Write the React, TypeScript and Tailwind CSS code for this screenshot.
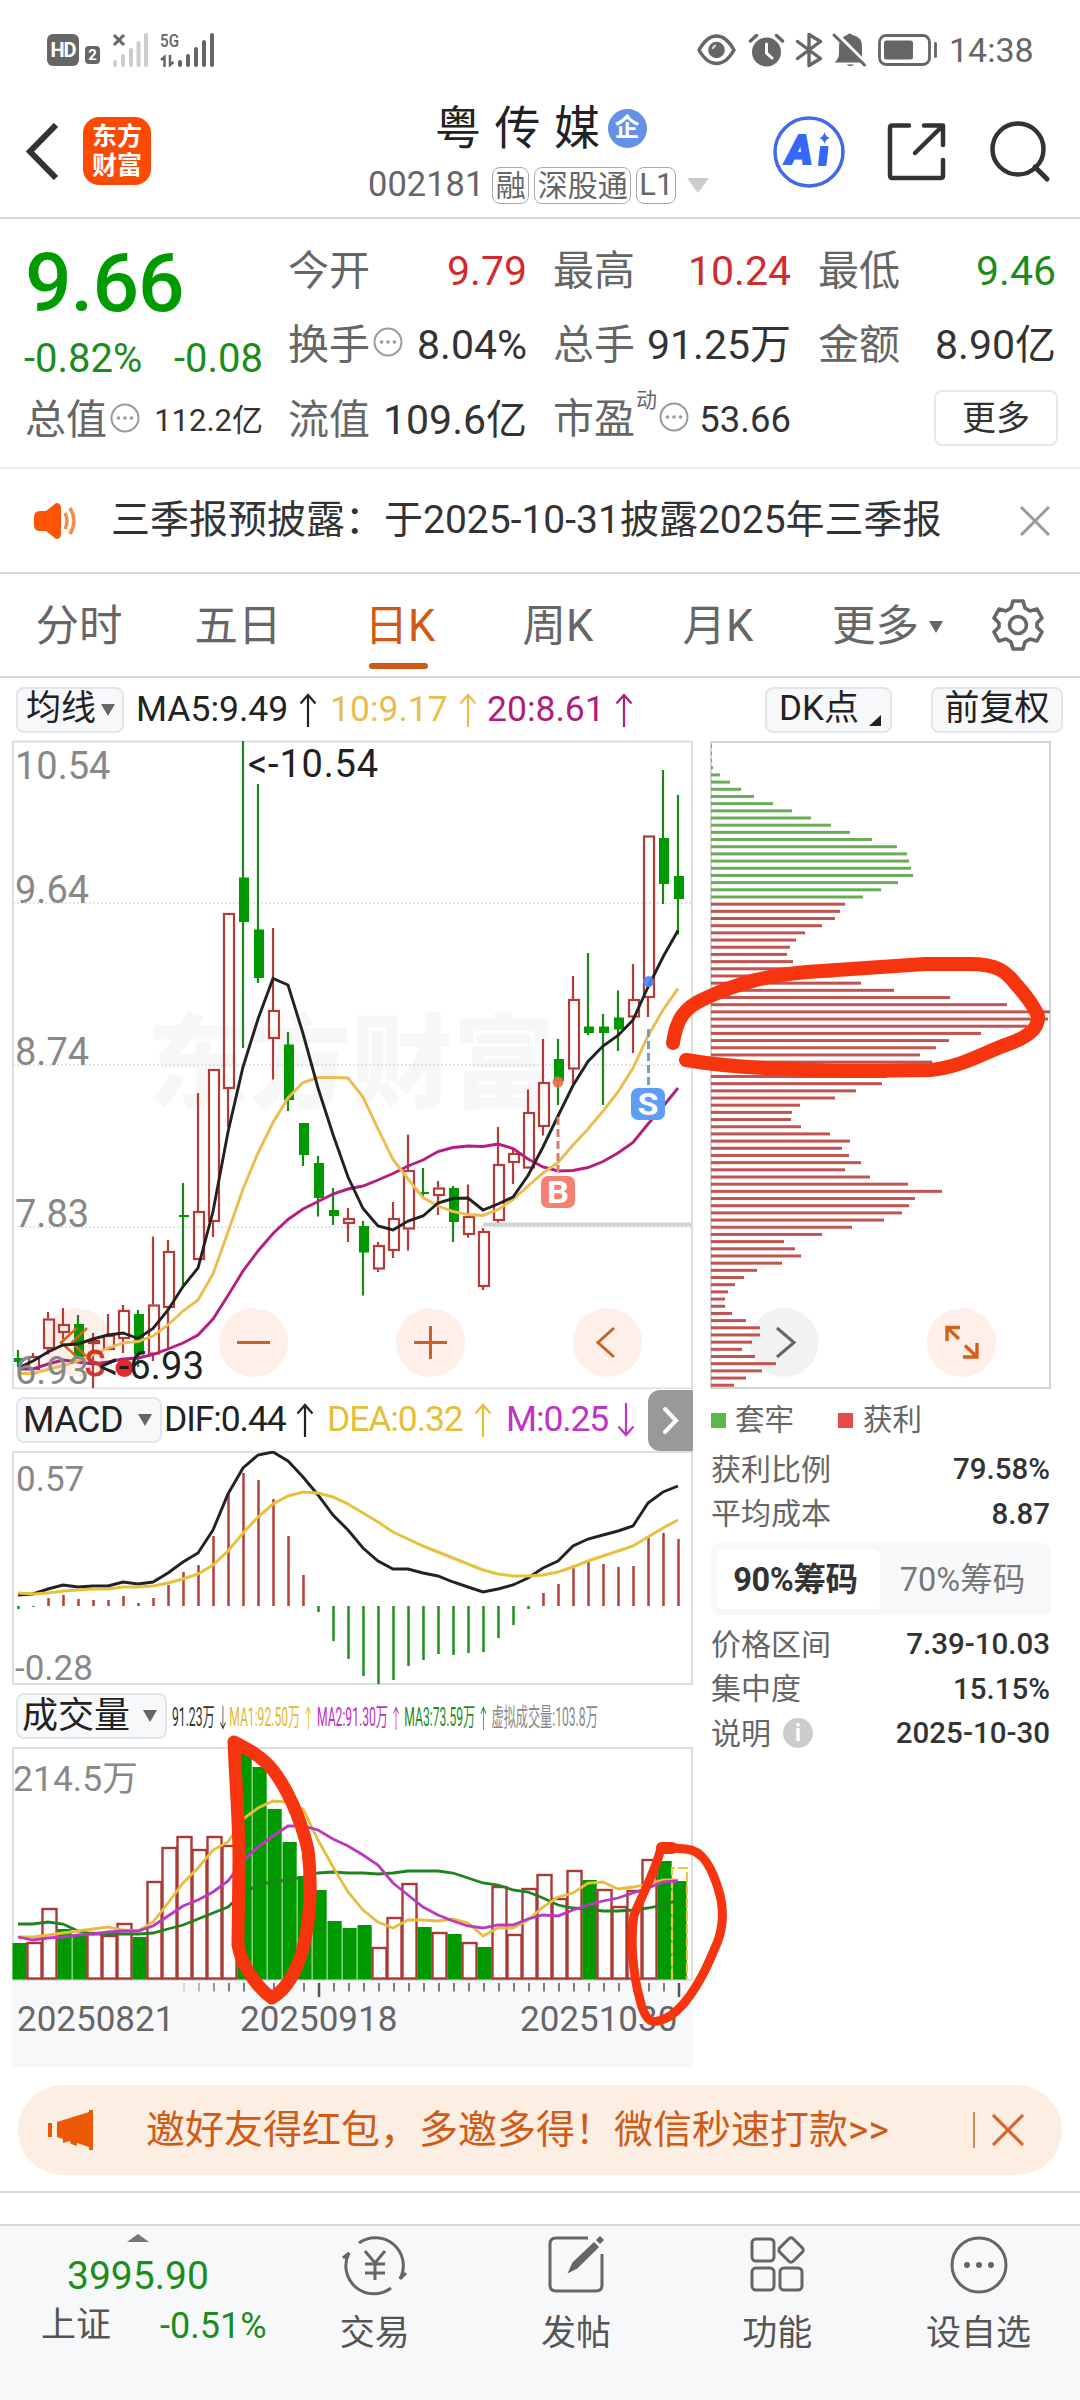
import type { ReactNode } from 'react'

type Candle = ['r' | 'g', number, number, number, number]

const STEP = 15

// colour, high, body top, body bottom, low
const candles: Candle[] = [
  ['g', 610, 618, 622, 627], ['r', 613, 616, 630, 630], ['r', 572, 578.5, 609, 614.5],
  ['r', 568, 584, 593, 599], ['g', 575, 584, 617, 617], ['r', 593, 600, 604, 648],
  ['r', 574, 595, 610, 610], ['r', 565, 570, 599, 613], ['g', 570, 574, 614.5, 627],
  ['r', 496.5, 564.5, 614.5, 621], ['r', 500, 511, 568, 610], ['g', 443, 475, 477, 545],
  ['r', 353, 471, 520, 520], ['r', 329, 329, 482, 497], ['r', 173, 173, 349, 387],
  ['g', 1, 137.5, 182, 308], ['g', 44, 189.5, 238, 243], ['r', 188, 270, 299, 339.5],
  ['g', 292, 304.5, 360, 371], ['g', 383, 383, 415, 426], ['g', 416, 423, 458, 476.5],
  ['g', 448, 470, 476, 485], ['r', 468, 478, 484, 502], ['g', 481, 486, 512.5, 555.5],
  ['r', 502, 505, 529.5, 532], ['r', 462, 478, 511, 518], ['r', 394.5, 430, 489.5, 510.5],
  ['g', 428, 452, 454, 458], ['r', 441, 447.5, 456, 475], ['g', 446, 448, 482, 502],
  ['r', 444.5, 476, 495, 497.5], ['r', 488, 491, 547, 550], ['r', 387, 424, 481, 483.5],
  ['r', 408.5, 413, 423, 444], ['r', 349.5, 372, 428.5, 428.5], ['r', 299, 342, 387, 395.5],
  ['g', 299, 319, 341, 365], ['r', 236, 259, 329.5, 343.5], ['g', 213, 286.5, 293, 295],
  ['g', 274, 286.5, 293, 365], ['g', 250.5, 277.5, 289.5, 311], ['r', 224, 259, 277.5, 313],
  ['r', 95.5, 95.5, 258, 277], ['g', 30, 98, 144, 164], ['g', 55, 136, 159, 194.5],
]

const ma5 = [628, 621, 612, 605, 604, 599, 595, 593, 598.5, 588.5, 570, 546.5, 528, 471.5, 392, 327, 279, 238.5, 245, 293.5, 348, 394.5, 437, 468.5, 486, 490, 481, 476, 463, 458.5, 458, 470, 464, 457, 435.5, 407, 376, 345.5, 321.5, 306, 295.5, 280, 247, 217, 190.5]
const ma10 = [633.5, 633.5, 629.5, 625.5, 621, 615, 608, 603, 601.5, 596, 585, 571, 560, 534, 492, 449, 413, 382.5, 358, 342.5, 337.5, 337.5, 338, 357, 389, 419.5, 439, 457.5, 466, 471.5, 474.5, 475.5, 469.5, 459.5, 446, 433, 422.5, 405, 389, 371, 352, 328, 296, 270, 248.5]
const ma20 = [629, 629, 624, 620, 622, 624, 622, 619, 618, 614.5, 609, 603, 595, 579, 555.5, 531, 511, 493.5, 479.5, 469, 461.5, 454, 449, 446, 440, 433.5, 426, 420, 411.5, 407.5, 406, 406.5, 404, 408.5, 419, 427, 431, 430.5, 427.5, 421.5, 413, 402.5, 384, 366.5, 348]

const macdBars = [-3, -1, 8, 11, 7, 6, 6, 10, 3, 8, 21, 34, 41, 70, 113, 133, 126, 107, 70, 31, -6, -35, -53, -70, -78, -74, -60, -54, -48, -49, -47, -46, -32, -19, -3, 13, 22, 41, 44, 42, 39, 40, 69, 73, 67]
const dif = [144, 143, 138, 134, 136, 135, 135, 131, 133, 131, 122, 111, 102, 79, 43, 17, 4, 1, 10, 26, 44, 64, 79, 97, 110, 118, 118, 122, 125, 131, 136, 141, 138, 134, 127, 117, 110, 95, 88, 84, 80, 75, 52, 41, 35]
const dea = [142, 143, 142, 140, 139, 138, 138, 136, 136, 135, 132, 128, 123, 114, 100, 82, 66, 53, 45, 41, 42, 46, 53, 62, 71, 81, 88, 95, 101, 107, 113, 119, 123, 125, 125, 124, 121, 116, 110, 105, 100, 95, 86, 77, 69]

const volColors = 'grrggrrrgrrrrrrgggggggggrrrgrgrgrrrrrrgrrrrgg'
const volTops = [196, 195, 161, 182, 189, 185, 188, 176, 190, 134, 100, 89, 102, 89, 98, 5, 20, 62, 95, 129, 143, 174, 181, 178, 200, 170, 136, 180, 185, 187, 195, 200, 139, 187, 141, 127, 151, 123, 133, 142, 159, 143, 112, 114, 134]
const vma1 = [190, 190, 188, 186, 184, 182, 180, 183, 184, 175, 156, 136, 121, 103, 95, 72, 61, 54, 55, 62, 93, 120, 145, 163, 175, 181, 173, 173, 174, 172, 176, 189, 181, 181, 173, 160, 150, 146, 136, 135, 142, 140, 137, 133, 133]
const vma2 = [190, 193, 191, 190, 188, 187, 185, 184, 184, 179, 169, 159, 153, 145, 134, 114, 100, 89, 79, 79, 83, 92, 99, 108, 118, 136, 148, 160, 168, 174, 179, 181, 178, 178, 172, 168, 169, 163, 158, 154, 151, 146, 141, 135, 134]
const vma3 = [177, 177, 175, 177, 184, 187, 187, 187, 187, 186, 182, 178, 172, 166, 160, 146, 138, 135, 133, 130, 126, 125, 126, 126, 127, 126, 124, 124, 124, 126, 131, 136, 138, 143, 145, 151, 158, 161, 162, 164, 164, 163, 161, 158, 153]

const trapped = [1, 1, 1, 2, 9, 19, 30, 43, 62, 81, 100, 120, 139, 161, 186, 196, 198, 200, 202, 187, 170, 152]
const profit = [134, 129, 124, 111, 94, 85, 79, 76, 82, 106, 122, 150, 183, 239, 296, 339, 337, 316, 270, 238, 225, 209, 221, 196, 176, 171, 145, 124, 89, 81, 80, 90, 119, 139, 131, 138, 150, 134, 159, 197, 231, 204, 198, 191, 173, 141, 111, 73, 84, 90, 71, 46, 33, 24, 17, 14, 14, 21, 35, 49, 49, 41, 31, 44, 65, 51, 35, 23]

const line = (values: number[]) => values.map((y, i) => `${6 + i * STEP},${y}`).join(' ')

function Arrow({ down = false, className = '' }: { down?: boolean; className?: string }) {
  return (
    <svg className={className} width="18" height="34" viewBox="0 0 18 34" fill="none" stroke="currentColor" strokeWidth="2.2">
      {down ? <path d="M9 0V32M1.5 23.5L9 32L16.5 23.5" /> : <path d="M9 34V2M1.5 10.5L9 2L16.5 10.5" />}
    </svg>
  )
}

function Caret({ className = '' }: { className?: string }) {
  return (
    <svg className={className} width="14" height="12" viewBox="0 0 14 12" fill="currentColor">
      <path d="M0 0H14L7 12Z" />
    </svg>
  )
}

function Dots() {
  return (
    <svg width="30" height="30" viewBox="0 0 30 30" fill="none" stroke="#9a9a9a" strokeWidth="2">
      <circle cx="15" cy="15" r="13.5" />
      <g fill="#9a9a9a" stroke="none">
        <circle cx="8.5" cy="15" r="1.8" />
        <circle cx="15" cy="15" r="1.8" />
        <circle cx="21.5" cy="15" r="1.8" />
      </g>
    </svg>
  )
}

function StatusBar() {
  return (
    <div className="flex h-[100px] items-center pl-[47px] text-[#666]">
      <div className="flex h-8 w-8 items-center justify-center rounded-md bg-[#666] text-[20px] font-bold tracking-tighter text-white">HD</div>
      <div className="mt-[9px] ml-[6px] flex h-[18px] w-[15px] items-center justify-center rounded-sm bg-[#666] text-[15px] leading-[18px] font-bold text-white">2</div>
      <svg className="ml-[12px]" width="37" height="34" viewBox="0 0 37 34">
        <g fill="#ccc">
          <rect x="1" y="27" width="4" height="7" rx="2" />
          <rect x="9" y="21" width="4" height="13" rx="2" />
          <rect x="17" y="15" width="4" height="19" rx="2" />
          <rect x="24.500" y="8" width="4" height="26" rx="2" />
          <rect x="32" y="0" width="4" height="34" rx="2" />
        </g>
        <path d="M2 2L12 12M12 2L2 12" stroke="#666" strokeWidth="3" />
      </svg>
      <svg className="ml-[11px]" width="54" height="34" viewBox="0 0 54 34" fill="#666">
        <text x="0" y="14" fontSize="19" fontWeight="500" textLength="19" lengthAdjust="spacingAndGlyphs">5G</text>
        <path d="M4.500 34V24L1 27M10 22V32L13.500 29" stroke="#666" strokeWidth="2.500" fill="none" />
        <rect x="18" y="27" width="4" height="7" rx="2" />
        <rect x="26" y="21" width="4" height="13" rx="2" />
        <rect x="34" y="14" width="4" height="20" rx="2" />
        <rect x="42" y="7" width="4" height="27" rx="2" />
        <rect x="50" y="0" width="4" height="34" rx="2" />
      </svg>
      {/* eye, alarm, bluetooth, muted bell */}
      <svg className="ml-[483px]" width="170" height="36" viewBox="0 0 170 36" fill="none" stroke="#666">
        <path d="M2 18C7 9 13 4 19.500 4S32 9 37 18C32 27 26 31.500 19.500 31.500S7 27 2 18Z" strokeWidth="3.400" />
        <circle cx="19.500" cy="18" r="8.300" fill="#666" stroke="none" />
        <path d="M15.500 17A4.500 4.500 0 0 1 19 13.500" stroke="#ddd" strokeWidth="1.800" />
        <circle cx="69.500" cy="20" r="14.500" fill="#666" stroke="none" />
        <path d="M53.500 9L59.500 3.500M79.500 3.500L85.500 9" strokeWidth="3.400" strokeLinecap="round" />
        <path d="M69.500 12V21L75 26" stroke="#fff" strokeWidth="3" strokeLinecap="round" />
        <path d="M100.500 9.500L123.500 26.500L112 33.500V2.500L123.500 9.500L100.500 26.500" strokeWidth="3.400" strokeLinecap="round" strokeLinejoin="round" />
        <path d="M137.500 30.500Q142 27 142 21V15Q142 9 145 6Q148 3.500 150 3Q152.500 0 155.500 3Q165 5 165 14V22Q165 27 168 30.500Z" fill="#666" stroke="none" />
        <path d="M139 1.500L169 31.500" stroke="#fff" strokeWidth="4" />
        <path d="M137 3L167.500 33" strokeWidth="3" strokeLinecap="round" />
        <path d="M149.500 32.500H157Q153.500 36 149.500 32.500Z" fill="#666" stroke="none" />
      </svg>
      <svg className="ml-[11px]" width="60" height="32" viewBox="0 0 60 32" fill="none" stroke="#666" strokeWidth="2.800">
        <rect x="1.500" y="1.500" width="50" height="29" rx="6.500" />
        <rect x="6" y="6.500" width="29" height="19" rx="2.500" fill="#666" stroke="none" />
        <path d="M57.500 9.500V22.500" strokeLinecap="round" />
      </svg>
      <span className="ml-[11px] text-[34px]">14:38</span>
    </div>
  )
}

function Header() {
  return (
    <div className="flex h-[119px] border-b-2 border-[#d8d8d8]">
      <svg className="mt-[23px] ml-[26px]" width="34" height="57" viewBox="0 0 34 57" fill="none" stroke="#333" strokeWidth="6">
        <path d="M30 2L4 28.500L30 55" />
      </svg>
      <div className="mt-[17px] ml-[23px] flex h-[68px] w-[68px] flex-col items-center justify-center rounded-2xl bg-[#fb4a04] text-[25px] leading-[29px] font-bold text-white">
        <span>东方</span>
        <span>财富</span>
      </div>
      <div className="ml-[217px] w-[345px]">
        <div className="flex h-[56px] items-center pl-[67px]">
          <span className="text-[46px] tracking-[13.5px] text-[#222]">粤传媒</span>
          <span className="-ml-[6px] flex h-[39px] w-[39px] items-center justify-center rounded-full bg-[#6490e5] text-[25px] font-bold text-white">企</span>
        </div>
        <div className="mt-[10px] flex h-[38px] items-center whitespace-nowrap text-[#666]">
          <span className="text-[34.5px]">002181</span>
          <span className="ml-[8px] flex h-[37px] w-[37px] shrink-0 items-center justify-center rounded-lg border-[1.5px] border-[#aaa] text-[30px]">融</span>
          <span className="ml-[5px] flex h-[37px] w-[97px] shrink-0 items-center justify-center rounded-lg border-[1.5px] border-[#aaa] text-[30px]">深股通</span>
          <span className="ml-[5px] flex h-[37px] w-[40px] shrink-0 items-center justify-center rounded-lg border-[1.5px] border-[#aaa] text-[31px]">L1</span>
          <svg className="ml-[11px] shrink-0" width="22" height="15" viewBox="0 0 22 15">
            <path d="M0 0H22L11 15Z" fill="#ccc" />
          </svg>
        </div>
      </div>
      <svg className="mt-[15px] ml-[59px]" width="74" height="74" viewBox="0 0 74 74">
        <circle cx="37" cy="37" r="34" fill="none" stroke="#4169e8" strokeWidth="3.500" />
        <g fill="#3568f5">
          <text x="14" y="49" fontSize="40" fontWeight="900" fontStyle="italic" stroke="#3568f5" strokeWidth="2">A</text>
          <path d="M49 32H55.500L53.500 50H47Z" strokeLinejoin="round" stroke="#3568f5" strokeWidth="2" />
          <path d="M52.500 17Q53.500 22 58 23Q53.500 24 52.500 29Q51.500 24 47 23Q51.500 22 52.500 17Z" />
        </g>
      </svg>
      <svg className="mt-[21px] ml-[39px]" width="64" height="62" viewBox="0 0 64 62" fill="none" stroke="#333" strokeWidth="4.500" strokeLinecap="round" strokeLinejoin="round">
        <path d="M24 4.500H7Q5 4.500 5 7V54Q5 57 7 57H55.500Q58 57 58 54.500V39M39 4.500H58V24M57 5.500L30 32" />
      </svg>
      <svg className="mt-[21px] ml-[40px]" width="62" height="62" viewBox="0 0 62 62" fill="none" stroke="#333" strokeWidth="4.500">
        <circle cx="29" cy="28" r="25.500" />
        <path d="M46 46L58 58" strokeWidth="5" strokeLinecap="round" />
      </svg>
    </div>
  )
}

function Quote({ label, value, color = 'text-[#333]', dots }: { label: string; value: string; color?: string; dots?: boolean }) {
  return (
    <div className="flex h-[74.5px] items-center whitespace-nowrap text-[41px]">
      <span className="text-[#666]">{label}</span>
      {dots && <span className="-mt-[8px] ml-[3px]"><Dots /></span>}
      <span className={`ml-auto ${color}`}>{value}</span>
    </div>
  )
}

function QuoteBoard() {
  return (
    <div className="flex h-[250px] border-b-2 border-[#ededed] pt-[15px] pl-[25px] text-[#333]">
      <div className="w-[238px]">
        <div className="flex h-[99px] items-center text-[82px] font-medium tracking-[-1px] text-[#009b00]">9.66</div>
        <div className="-ml-px flex h-[52px] items-center justify-between text-[40px] text-[#1c8c1c]">
          <span>-0.82%</span>
          <span>-0.08</span>
        </div>
        <div className="flex h-[72px] items-center text-[41px] whitespace-nowrap text-[#666]">
          <span>总值</span>
          <span className="-mt-[6px] ml-[3px]"><Dots /></span>
          <span className="ml-auto text-[31px] text-[#333]">112.2亿</span>
        </div>
      </div>
      <div className="ml-[25px] w-[239px]">
        <Quote label="今开" value="9.79" color="text-[#d22b2b]" />
        <Quote label="换手" value="8.04%" dots />
        <Quote label="流值" value="109.6亿" />
      </div>
      <div className="ml-[26px] w-[238px]">
        <Quote label="最高" value="10.24" color="text-[#d22b2b]" />
        <Quote label="总手" value="91.25万" />
        <div className="flex h-[74px] items-center text-[41px] whitespace-nowrap">
          <span className="text-[#666]">市盈</span>
          <span className="-mt-[38px] ml-[1px] text-[21px] text-[#666]">动</span>
          <span className="-mt-[6px] ml-[2px]"><Dots /></span>
          <span className="ml-auto text-[36.5px]">53.66</span>
        </div>
      </div>
      <div className="ml-[27px] w-[238px]">
        <Quote label="最低" value="9.46" color="text-[#1c8c1c]" />
        <Quote label="金额" value="8.90亿" />
        <div className="-mt-[2px] flex h-[74px] items-center justify-end">
          <button className="-mr-[2px] h-[56px] w-[124px] rounded-lg border-2 border-[#e8e8e8] text-[34px]">更多</button>
        </div>
      </div>
    </div>
  )
}

function Notice() {
  return (
    <div className="flex h-[105px] items-center border-b-2 border-[#d8d8d8] pl-[34px]">
      <svg width="46" height="36" viewBox="0 0 46 36">
        <path d="M6 8H12L22 0Q27 0 27 5V31Q27 36 22 36L12 28H6Q0 28 0 22V14Q0 8 6 8Z" fill="#fd5504" />
        <path d="M31 10Q35 18 31 26M36 5Q44 18 36 31" fill="none" stroke="#f78b4c" strokeWidth="3.500" />
      </svg>
      <span className="ml-[31px] text-[39px] whitespace-nowrap text-[#333]">三季报预披露：于2025-10-31披露2025年三季报</span>
      <svg className="ml-[78px]" width="30" height="30" viewBox="0 0 30 30" stroke="#999" strokeWidth="3">
        <path d="M1 1L29 29M29 1L1 29" />
      </svg>
    </div>
  )
}

function Tabs() {
  return (
    <div className="flex h-[104px] items-center border-b-2 border-[#d8d8d8] pt-[4px] text-[43.5px] text-[#666]">
      <span className="w-[158px] text-center">分时</span>
      <span className="w-[160px] text-center">五日</span>
      <span className="relative w-[164px] text-center text-[#d05a15]">
        日K
        <i className="absolute bottom-[-9px] left-[51px] h-[6px] w-[59px] rounded-full bg-[#d05a15]" />
      </span>
      <span className="w-[152px] text-center">周K</span>
      <span className="w-[168px] text-center">月K</span>
      <span className="ml-[30px]">更多</span>
      <Caret className="ml-[10px]" />
      <svg className="-mt-[4px] ml-[49px]" width="52" height="52" viewBox="0 0 52 52" fill="none" stroke="#666" strokeWidth="3.600" strokeLinejoin="round">
        <path d="M21 2H31L33 9L38 12L45 10L50 19L45 24V28L50 33L45 42L38 40L33 43L31 50H21L19 43L14 40L7 42L2 33L7 28V24L2 19L7 10L14 12L19 9Z" />
        <circle cx="26" cy="26" r="8.500" />
      </svg>
    </div>
  )
}

function Pill({ children, className }: { children: ReactNode; className: string }) {
  return (
    <div className={`flex h-[46px] shrink-0 items-center rounded-lg border-2 border-[#e3e5ea] bg-[#f7f8fa] whitespace-nowrap text-[#222] ${className}`}>
      {children}
    </div>
  )
}

function Toolbar() {
  return (
    <div className="flex h-[63px] items-center pl-[16px] text-[35.5px] whitespace-nowrap">
      <Pill className="w-[108px] pl-[8px] text-[35px]">
        均线<Caret className="ml-[5px] text-[#666]" />
      </Pill>
      <span className="ml-[12px] w-[163px] text-[#222]">MA5:9.49</span>
      <Arrow className="text-[#222]" />
      <span className="ml-[13px] w-[129px] text-[#e9bd52]">10:9.17</span>
      <Arrow className="text-[#e9bd52]" />
      <span className="ml-[10px] w-[128px] text-[#b01c7c]">20:8.61</span>
      <Arrow className="text-[#b01c7c]" />
      <Pill className="ml-[132px] w-[127px] pl-[12px] text-[35px]">
        DK点
        <svg className="mt-[22px] ml-[10px]" width="12" height="11" viewBox="0 0 12 11"><path d="M12 0V11H0Z" fill="#222" /></svg>
      </Pill>
      <Pill className="ml-[39px] w-[132px] justify-center text-[35px]">前复权</Pill>
    </div>
  )
}

function KChart() {
  return (
    <svg className="-mt-px" width="681" height="649" viewBox="0 0 681 649">
      <rect x="1" y="1.500" width="679" height="647" fill="#fff" stroke="#dedede" strokeWidth="2" />
      <text x="135" y="360" fontSize="102" fontWeight="900" fill="#f7f7f7">东方财富</text>
      {[163, 325, 487].map(y => (
        <path key={y} d={`M1 ${y}H679`} stroke="#dcdcdc" strokeWidth="1.500" strokeDasharray="2 2" />
      ))}
      {[77, 253.5, 430.5, 607.5].map(x => <circle key={x} cx={x - 12} cy="602.500" r="34.500" fill="#fef0e9" />)}
      <g stroke="#c8622a" strokeWidth="3" fill="none">
        <path d="M225 602.500H258M402 602.500H435M418.500 586V619M602 588L586 602.500L602 617" />
      </g>
      {candles.map(([c, high, top, bottom, low], i) => {
        const x = 6 + i * STEP
        if (c === 'g') {
          return (
            <g key={i}>
              <path d={`M${x} ${high}V${low}`} stroke="#1c861c" strokeWidth="2.2" />
              <rect x={x - 4} y={top} width="10" height={bottom - top} fill="#009a00" />
            </g>
          )
        }
        return (
          <g key={i} stroke="#b33c38" strokeWidth="2.2" fill="none">
            <path d={`M${x} ${high}V${top}M${x} ${bottom}V${low}`} />
            <rect x={x - 4} y={top + 1} width="10" height={Math.max(bottom - top - 2, 2)} />
          </g>
        )
      })}
      <path d="M65 588L49 602.500L65 617M75 588L60 602.500L75 617" stroke="#d0661e" strokeWidth="2.600" fill="none" />
      <path d="M471 484.500H679" stroke="#cfd3d6" strokeWidth="4" />
      <polyline points={line(ma20)} fill="none" stroke="#b51e80" strokeWidth="2.900" />
      <polyline points={line(ma10)} fill="none" stroke="#ecbc50" strokeWidth="2.900" />
      <polyline points={line(ma5)} fill="none" stroke="#222" strokeWidth="2.900" />
      {/* buy / sell marks */}
      <path d="M546 377V432" stroke="#d97a70" strokeWidth="3" strokeDasharray="8 4" />
      <circle cx="546" cy="342" r="5.500" fill="#ee6a4a" opacity=".9" />
      <rect x="529" y="436" width="34" height="32" rx="7" fill="#f57f70" />
      <text x="546" y="463" fontSize="31" fontWeight="700" fill="#fff" textAnchor="middle" textLength="22" lengthAdjust="spacingAndGlyphs">B</text>
      <path d="M636.500 289V345" stroke="#6b9fd2" strokeWidth="3" strokeDasharray="8 4" />
      <circle cx="636.500" cy="241.500" r="5.500" fill="#4b86ee" opacity=".9" />
      <rect x="619" y="348" width="34" height="32" rx="7" fill="#5f9ef5" />
      <text x="636" y="375" fontSize="31" fontWeight="700" fill="#fff" textAnchor="middle" textLength="21" lengthAdjust="spacingAndGlyphs">S</text>
      <g fontSize="38" fill="#888">
        <text x="3" y="38.500">10.54</text>
        <text x="3" y="163">9.64</text>
        <text x="3" y="325">8.74</text>
        <text x="3" y="486.500">7.83</text>
        <text x="3" y="644">6.93</text>
      </g>
      <text x="73" y="636" fontSize="37" fill="#d0342c" stroke="#d0342c" strokeWidth="1" textLength="20" lengthAdjust="spacingAndGlyphs">S</text>
      <circle cx="112.500" cy="628" r="9" fill="#e22a2a" />
      <g fontSize="38" fill="#222">
        <text x="236" y="37" textLength="130">&lt;-10.54</text>
        <text x="87" y="639" textLength="105">&lt;-6.93</text>
      </g>
    </svg>
  )
}

function MacdPanel() {
  return (
    <>
      <div className="flex h-[62px] items-center pl-[4px] text-[35.5px] tracking-[-1.1px] whitespace-nowrap">
        <Pill className="w-[146px] pl-[5px] text-[36px] tracking-[-0.5px]">
          MACD<Caret className="ml-[15px] text-[#666]" />
        </Pill>
        <span className="ml-[2px] w-[132px] text-[#222]">DIF:0.44</span>
        <Arrow className="text-[#222]" />
        <span className="ml-[13px] w-[147px] text-[#e3bf3a]">DEA:0.32</span>
        <Arrow className="text-[#e3bf3a]" />
        <span className="ml-[14px] w-[111px] text-[#bc35c4]">M:0.25</span>
        <Arrow down className="text-[#bc35c4]" />
        <div className="ml-auto flex h-[61px] w-[45px] items-center justify-center rounded-l-xl bg-[#999]">
          <svg width="17" height="29" viewBox="0 0 17 29" fill="none" stroke="#fff" strokeWidth="4" strokeLinecap="round">
            <path d="M3 3L14 14.500L3 26" />
          </svg>
        </div>
      </div>
      <svg width="681" height="234" viewBox="0 0 681 234">
        <rect x="1" y="1" width="679" height="232" fill="#fff" stroke="#dedede" strokeWidth="2" />
        {macdBars.map((v, i) => (
          <path key={i} d={`M${6.5 + i * STEP} 155V${155 - v}`} stroke={v > 0 ? '#b3403a' : '#1f8f1f'} strokeWidth="2.5" />
        ))}
        <polyline points={line(dif)} fill="none" stroke="#222" strokeWidth="2.900" />
        <polyline points={line(dea)} fill="none" stroke="#e6c23c" strokeWidth="3" />
        <g fontSize="35" fill="#888">
          <text x="4" y="40">0.57</text>
          <text x="3" y="229">-0.28</text>
        </g>
      </svg>
    </>
  )
}

function VolumePanel() {
  return (
    <>
      <div className="flex h-[62px] items-center pl-[4px] whitespace-nowrap">
        <Pill className="w-[151px] pl-[4px] text-[36px]">
          成交量<Caret className="ml-[13px] text-[#666]" />
        </Pill>
        <div className="mt-[3px] h-[34px] w-[430px] pl-[5px]">
          <div className="flex w-max origin-left scale-x-[0.485] items-center text-[25px] leading-[34px]">
            <span className="flex w-[118px] text-[#333]">91.23万<Arrow down className="ml-1 h-[24px] w-[26px] shrink-0 self-center" /></span>
            <span className="flex w-[181px] text-[#e3b93a]">MA1:92.50万<Arrow className="ml-1 h-[24px] w-[26px] shrink-0 self-center" /></span>
            <span className="flex w-[180px] text-[#b832c0]">MA2:91.30万<Arrow className="ml-1 h-[24px] w-[26px] shrink-0 self-center" /></span>
            <span className="flex w-[180px] text-[#1c8c1c]">MA3:73.59万<Arrow className="ml-1 h-[24px] w-[26px] shrink-0 self-center" /></span>
            <span className="text-[#888]">虚拟成交量:103.8万</span>
          </div>
        </div>
      </div>
      <svg width="681" height="235" viewBox="0 0 681 235">
        <rect x="1" y="1" width="679" height="232" fill="#fff" stroke="#dedede" strokeWidth="2" />
        {volTops.map((top, i) =>
          volColors[i] === 'g' ? (
            <rect key={i} x={i * STEP + 0.5} y={top} width="14.200" height={232.5 - top} fill="#009a00" />
          ) : (
            <rect key={i} x={i * STEP + 0.5} y={top + 1} width="14" height={230.5 - top} fill="#fff" stroke="#ab3a36" strokeWidth="2.400" />
          )
        )}
        <path d="M660 232V121H675V232" fill="none" stroke="#e8c840" strokeWidth="2.200" strokeDasharray="10 3" />
        <polyline points={line(vma3)} fill="none" stroke="#1f8420" strokeWidth="2.800" />
        <polyline points={line(vma1)} fill="none" stroke="#e6bd3c" strokeWidth="2.800" />
        <polyline points={line(vma2)} fill="none" stroke="#bd38c0" strokeWidth="2.800" />
        <text x="1" y="44" fontSize="35.500" fill="#888">214.5万</text>
      </svg>
      <svg width="681" height="85" viewBox="0 0 681 85">
        <rect width="681" height="85" fill="#f7f8fa" />
        {Array.from({ length: 34 }, (_, k) => {
          const i = k + 11
          const major = i === 20 || i === 44
          return (
            <path
              key={i}
              d={`M${7 + i * STEP} 1V${major ? 15 : 9.5}`}
              stroke="#555"
              strokeWidth={major ? 2.5 : 1.5}
              opacity={Math.min(1, 0.25 + k * 0.25)}
            />
          )
        })}
        <g fontSize="35" fill="#666">
          <text x="5" y="48.500">20250821</text>
          <text x="228" y="48.500">20250918</text>
          <text x="508" y="48.500">20251030</text>
        </g>
      </svg>
    </>
  )
}

function ChipRow({ label, value, info }: { label: string; value: string; info?: boolean }) {
  return (
    <div className="flex h-[44.5px] items-center text-[30px] whitespace-nowrap">
      <span className="text-[#666]">{label}</span>
      {info && (
        <span className="ml-[12px] flex h-[30px] w-[30px] items-center justify-center rounded-full bg-[#ccc] text-[24px] font-bold text-white">i</span>
      )}
      <span className="mr-px ml-auto text-[29.5px] font-medium text-[#333]">{value}</span>
    </div>
  )
}

function ChipPanel() {
  return (
    <div className="ml-[17px] w-[341px]">
      <svg className="-mt-px" width="341" height="649" viewBox="0 0 341 649">
        <rect x="1" y="2" width="339" height="646" fill="#fff" stroke="#c9c9c9" strokeWidth="1.600" />
        <circle cx="74" cy="602.500" r="34.500" fill="#f2f2f2" />
        <circle cx="251.500" cy="602.500" r="34.500" fill="#fef0e9" />
        {[...trapped, ...profit].map((w, i) => (
          <rect key={i} x="1" y={4.7 + i * 7.18} width={w} height="3" fill={i < trapped.length ? '#6bab58' : '#c05452'} />
        ))}
        <path d="M67 588L84 602.500L67 617" fill="none" stroke="#666" strokeWidth="3" />
        <path d="M250 587.500H237V601M237 587.500L249 599M253 617H267V603M267 617L255 605.500" fill="none" stroke="#d2611e" strokeWidth="3.400" />
      </svg>
      <div className="pl-px">
        <div className="flex h-[58px] items-center pt-[4px] text-[29.5px] text-[#666]">
          <i className="h-[15px] w-[15px] bg-[#5cb847]" />
          <span className="ml-[9px]">套牢</span>
          <i className="ml-[44px] h-[15px] w-[15px] bg-[#e64b4b]" />
          <span className="ml-[10px]">获利</span>
        </div>
        <ChipRow label="获利比例" value="79.58%" />
        <ChipRow label="平均成本" value="8.87" />
        <div className="mt-[7px] mb-[7px] flex h-[72px] items-center rounded-lg bg-[#f7f8fa] p-[6px] text-[32.5px] whitespace-nowrap">
          <span className="flex h-[60px] w-[163px] items-center justify-center rounded-md bg-white pt-[2px] pr-[6px] font-bold tracking-[-0.4px] text-[#333]">90%筹码</span>
          <span className="flex-1 pt-[2px] text-center text-[#777]">70%筹码</span>
        </div>
        <ChipRow label="价格区间" value="7.39-10.03" />
        <ChipRow label="集中度" value="15.15%" />
        <ChipRow label="说明" value="2025-10-30" info />
      </div>
    </div>
  )
}

function Promo() {
  return (
    <div className="h-[126px] border-b-2 border-[#d8d8d8] pt-[18px] pl-[18px]">
      <div className="flex h-[90px] w-[1044px] items-center rounded-full bg-[#fdeee4] pl-[30px] text-[#cf5b16]">
        <svg width="46" height="40" viewBox="0 0 46 40" fill="#ec5a08">
          <path d="M0 13H4V27H0ZM9 12L41 2V0H45V40H41V37L29 33V36L23 34L22 31L15 33V29L9 27Z" />
        </svg>
        <span className="ml-[52px] text-[39px] whitespace-nowrap">邀好友得红包，多邀多得！微信秒速打款&gt;&gt;</span>
        <i className="ml-auto h-[36px] w-[2px] bg-[#d58a5e]" />
        <svg className="mr-[38px] ml-[17px]" width="32" height="32" viewBox="0 0 32 32" stroke="#d8652a" strokeWidth="3.200">
          <path d="M1 1L31 31M31 1L1 31" />
        </svg>
      </div>
    </div>
  )
}

function NavItem({ label, children }: { label: string; children: ReactNode }) {
  return (
    <div className="flex w-[201.300px] flex-col items-center pt-[6px]">
      <svg width="68" height="66" viewBox="0 0 68 66" fill="none" stroke="#666" strokeWidth="3">
        {children}
      </svg>
      <span className="mt-[8px] text-[35px] leading-[56px] text-[#555]">{label}</span>
    </div>
  )
}

function BottomNav() {
  return (
    <div className="mt-[31px] flex h-[176px] border-t-2 border-[#d8d8d8] bg-[#f7f8fa]">
      <div className="w-[274px] pt-[8px]">
        <svg className="ml-[127px]" width="22" height="8" viewBox="0 0 22 8"><path d="M0 8L11 0L22 8Z" fill="#777" /></svg>
        <div className="mt-[11px] ml-[67px] text-[39px] leading-[46px] text-[#1c8c1c]">3995.90</div>
        <div className="mt-[4px] flex h-[46px] items-center">
          <span className="ml-[41px] text-[35px] text-[#555]">上证</span>
          <span className="ml-[49px] text-[36px] text-[#1c8c1c]">-0.51%</span>
        </div>
      </div>
      <NavItem label="交易">
        <path d="M18 11A28 28 0 0 1 59 47L65 41M50 56A28 28 0 0 1 8 21L2 26" />
        <path d="M24 19L34 31L44 19M34 31V48M24 32H44M24 41H44" />
      </NavItem>
      <NavItem label="发帖">
        <path d="M46 6H14Q8 6 8 12V53Q8 59 14 59H54Q60 59 60 53V22" />
        <path d="M27 40L31 31L52 11L56 15L35 36ZM55 8L58 5L61 8L58 11Z" fill="#666" strokeWidth="1.500" />
      </NavItem>
      <NavItem label="功能">
        <rect x="9" y="7" width="22" height="22" rx="4" />
        <rect x="9" y="36" width="22" height="22" rx="4" />
        <rect x="37" y="36" width="22" height="22" rx="4" />
        <rect x="38.500" y="8.500" width="19" height="19" rx="3" transform="rotate(45 48 18)" />
      </NavItem>
      <NavItem label="设自选">
        <circle cx="34" cy="33" r="27" />
        <g fill="#666" stroke="none">
          <circle cx="22" cy="33" r="3" />
          <circle cx="34" cy="33" r="3" />
          <circle cx="46" cy="33" r="3" />
        </g>
      </NavItem>
    </div>
  )
}

// Hand-drawn marker strokes on top of the charts
function Marker() {
  return (
    <svg className="pointer-events-none absolute top-0 left-0" width="1080" height="2400" viewBox="0 0 1080 2400" fill="none" stroke="#f6350f" strokeLinecap="round" strokeLinejoin="round">
      <path strokeWidth="14" d="M673 1043C676 1022 682 1008 706 998C740 982 770 975 807 972C850 969 890 966 925 964H970C997 964 1006 972 1014 982C1024 993 1034 1006 1038 1016C1039 1029 1026 1038 1008 1044C985 1052 962 1067 930 1070C880 1071 830 1072 790 1069C755 1068 715 1065 686 1060" />
      <path strokeWidth="13" d="M234 1742C236 1790 239 1820 239 1860L238 1945C242 1968 260 1990 272 1998C290 1987 300 1963 305 1940C312 1905 311 1875 308 1850C300 1815 285 1785 272 1769C262 1757 250 1750 234 1742Z" />
      <path strokeWidth="9" d="M661 1848C656 1870 642 1895 634 1915C630 1940 633 1975 640 2000C646 2025 654 2025 670 2016C690 2003 706 1970 714 1950C724 1930 724 1912 720 1895C712 1866 702 1850 686 1849L661 1847" />
      <path strokeWidth="12" d="M662 1848L672 1848" />
    </svg>
  )
}

export default function App() {
  return (
    <div className="relative h-[2400px] w-[1080px] overflow-hidden bg-white font-['Roboto','Noto_Sans_CJK_SC',sans-serif]">
      <StatusBar />
      <Header />
      <QuoteBoard />
      <Notice />
      <Tabs />
      <Toolbar />
      <div className="flex h-[1326px] pl-[12px]">
        <div className="w-[681px]">
          <KChart />
          <MacdPanel />
          <VolumePanel />
        </div>
        <ChipPanel />
      </div>
      <Promo />
      <BottomNav />
      <Marker />
    </div>
  )
}
